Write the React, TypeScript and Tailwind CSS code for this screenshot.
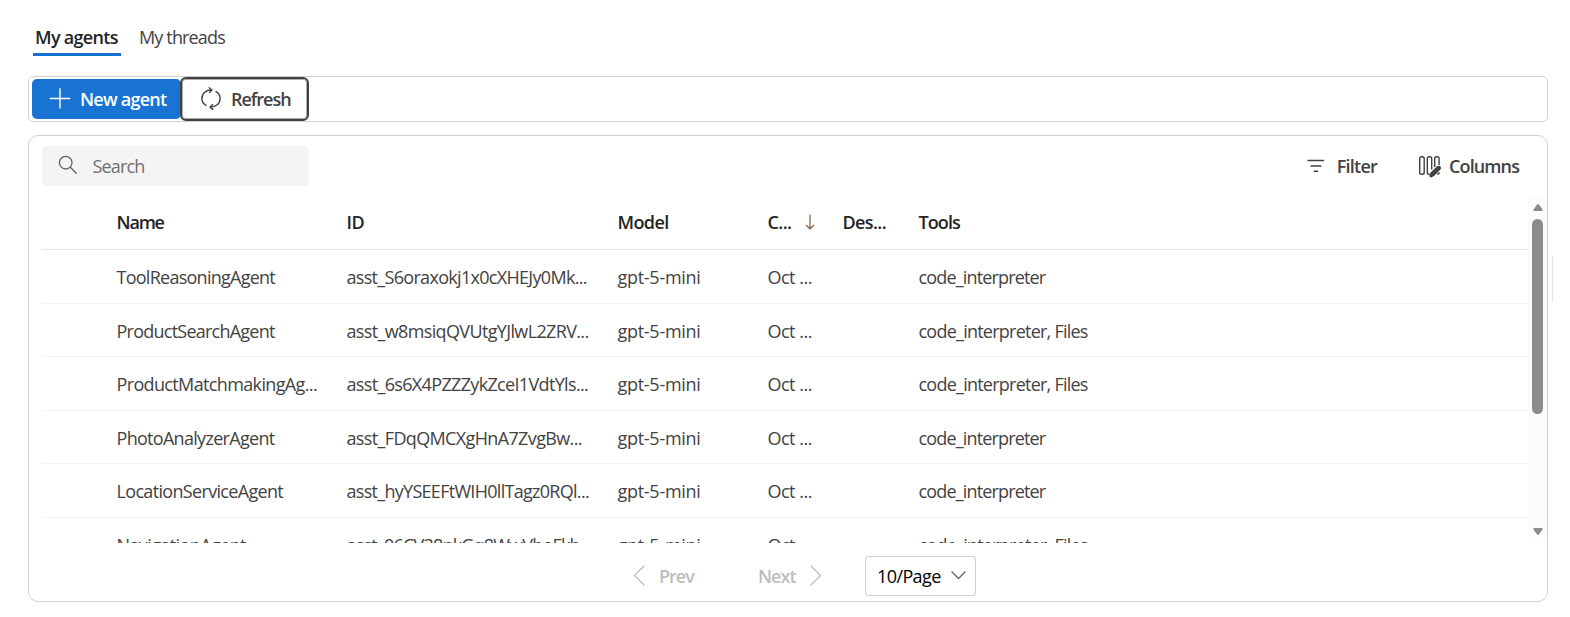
import React from "react";

type Row = { name: string; id: string; idTracking: string; nameTracking: string; tools: string; toolsTracking: string };

const rows: Row[] = [
  { name: "ToolReasoningAgent", nameTracking: "tracking-[-0.74px]", id: "asst_S6oraxokj1x0cXHEJy0Mk...", idTracking: "tracking-[-0.69px]", tools: "code_interpreter", toolsTracking: "tracking-[-0.84px]" },
  { name: "ProductSearchAgent", nameTracking: "tracking-[-0.76px]", id: "asst_w8msiqQVUtgYJlwL2ZRV...", idTracking: "tracking-[-0.64px]", tools: "code_interpreter, Files", toolsTracking: "tracking-[-0.76px]" },
  { name: "ProductMatchmakingAg...", nameTracking: "tracking-[-0.64px]", id: "asst_6s6X4PZZZykZceI1VdtYls...", idTracking: "tracking-[-0.66px]", tools: "code_interpreter, Files", toolsTracking: "tracking-[-0.76px]" },
  { name: "PhotoAnalyzerAgent", nameTracking: "tracking-[-0.7px]", id: "asst_FDqQMCXgHnA7ZvgBw...", idTracking: "tracking-[-0.64px]", tools: "code_interpreter", toolsTracking: "tracking-[-0.84px]" },
  { name: "LocationServiceAgent", nameTracking: "tracking-[-0.67px]", id: "asst_hyYSEEFtWIH0llTagz0RQl...", idTracking: "tracking-[-0.71px]", tools: "code_interpreter", toolsTracking: "tracking-[-0.84px]" },
  { name: "NavigationAgent", nameTracking: "tracking-[-0.6px]", id: "asst_06CV38nkGq8WwVhoFkh...", idTracking: "tracking-[-0.8px]", tools: "code_interpreter, Files", toolsTracking: "tracking-[-0.76px]" },
];

const grid = "grid grid-cols-[230px_271px_150px_75px_76px_1fr] pl-[74.5px] whitespace-nowrap";

function PlusIcon() {
  return (
    <svg width="22" height="22" viewBox="0 0 22 22" fill="none" stroke="currentColor" strokeWidth="1.4" strokeLinecap="round">
      <path d="M11 0.7V19.9M1.2 10.5H20.8" />
    </svg>
  );
}

function RefreshIcon() {
  return (
    <svg width="22" height="24" viewBox="0 0 22 24" fill="none" stroke="currentColor" strokeWidth="1.4" strokeLinecap="round" strokeLinejoin="round">
      <path d="M6 18.4C3.5 17 1.9 14.7 1.9 11.6C1.9 6.4 6 2.9 11.8 3M9.2 0.8L11.9 3L9.5 5.6" />
      <path d="M16 4.7C18.5 6.1 20.1 8.4 20.1 11.5C20.1 16.7 16 20.2 10.2 20.1M12.5 17.5L10.1 20.1L12.8 22.4" />
    </svg>
  );
}

function SearchIcon() {
  return (
    <svg width="20" height="20" viewBox="0 0 20 20" fill="none" stroke="currentColor" strokeWidth="1.3" strokeLinecap="round">
      <circle cx="7.7" cy="7.7" r="6.3" />
      <path d="M12.3 12.3L18.2 18.2" />
    </svg>
  );
}

function FilterIcon() {
  return (
    <svg width="18" height="14" viewBox="0 0 18 14" fill="none" stroke="currentColor" strokeWidth="1.4" strokeLinecap="round">
      <path d="M1 1.5H16.6M4 7H13.9M7.2 12.3H10.6" />
    </svg>
  );
}

function ColumnsIcon() {
  return (
    <svg width="24" height="23" viewBox="0 0 24 23" fill="none" stroke="currentColor" strokeWidth="1.4">
      <rect x="1.7" y="1.7" width="4.5" height="17.6" rx="1.8" />
      <path d="M11.6 19.3H11.2Q9.3 19.3 9.3 17.4V3.5Q9.3 1.7 11.2 1.7H11.8Q13.7 1.7 13.7 3.5V14.6" />
      <path d="M16.7 12V3.5Q16.7 1.7 18.5 1.7H19.2Q21.1 1.7 21.1 3.5V10" />
      <path d="M21.2 17.2Q21.2 19.1 19.2 19.3" />
      <path d="M11.6 22.2L12.6 17.6L19.1 11.3Q20.6 10 22.3 11.3Q23.7 13 22.3 14.6L16 20.9Z" fill="currentColor" stroke="none" />
      <path d="M13.3 20.5L21 12.9" strokeWidth="3.6" strokeLinecap="round" />
    </svg>
  );
}

function Chevron({ d, w, h }: { d: string; w: number; h: number }) {
  return (
    <svg width={w} height={h} viewBox={`0 0 ${w} ${h}`} fill="none" stroke="currentColor" strokeWidth="1.3" strokeLinecap="round" strokeLinejoin="round">
      <path d={d} />
    </svg>
  );
}

export default function App() {
  return (
    <div className="flex h-[617px] w-[1570px] overflow-hidden bg-white font-['Open_Sans','Noto_Sans',sans-serif] text-[18px] leading-[24px] text-[#424242]">
      <div className="ml-[28px] flex w-[1520px] flex-col">
        <nav className="flex h-[56px] gap-[18px] pl-[5px]">
          <button className="flex w-[88px] flex-col items-start border-b-[3px] border-[#1672d0] pl-[2px] pt-[25px] font-semibold tracking-[-0.7px] text-[#242424] whitespace-nowrap">My agents</button>
          <button className="flex flex-col pt-[25px] tracking-[-0.85px]">My threads</button>
        </nav>

        <div className="mt-[20px] flex h-[46px] shrink-0 items-center rounded-[5px] border border-[#d1d1d1] pl-[3px]">
          <button className="flex h-[40px] w-[149px] items-center rounded-[5px] bg-[#1873d3] pl-[17px] font-semibold text-white whitespace-nowrap">
            <PlusIcon />
            <span className="ml-[9px] tracking-[-0.75px]">New agent</span>
          </button>
          <button className="-ml-px flex h-[44px] w-[129px] items-center rounded-[6px] border-2 border-[#424242] bg-white pl-[18px] font-semibold shadow-[inset_0_0_0_1px_#42424270]">
            <RefreshIcon />
            <span className="ml-[9px] tracking-[-1.02px]">Refresh</span>
          </button>
        </div>

        <section className="mt-[13px] flex h-[467px] shrink-0 flex-col rounded-[10px] border border-[#d1d1d1]">
          <div className="flex h-[60px] shrink-0 items-center pl-[13px] pr-[28px]">
            <div className="flex h-[40px] w-[267px] items-center rounded-[5px] bg-[#f4f4f4] pl-[16px] text-[#616161]">
              <span className="mb-[3px]"><SearchIcon /></span>
              <span className="ml-[14.5px] tracking-[-0.85px] text-[#707070]">Search</span>
            </div>
            <div className="ml-auto flex items-center font-semibold">
              <FilterIcon />
              <span className="ml-[12px] tracking-[-0.75px]">Filter</span>
              <span className="ml-[41px] flex"><ColumnsIcon /></span>
              <span className="ml-[7px] tracking-[-0.9px]">Columns</span>
            </div>
          </div>

          <div className="flex h-[347px] shrink-0">
            <div className="ml-[13px] flex w-[1486px] flex-col overflow-hidden">
              <div className={`${grid} h-[54px] shrink-0 items-center border-b border-[#e6e6e6] pb-[2px] font-semibold tracking-[-0.6px] text-[#242424]`}>
                <span className="tracking-[-1.2px]">Name</span>
                <span>ID</span>
                <span>Model</span>
                <span className="flex items-center gap-[14px]">
                  C...
                  <svg width="10" height="16" viewBox="0 0 10 16" fill="none" stroke="#7d5f45" strokeWidth="1.2"><path d="M5 0.5V15M1 11L5 15L9 11" /></svg>
                </span>
                <span>Des...</span>
                <span className="tracking-[-0.9px]">Tools</span>
              </div>
              {rows.map((r) => (
                <div key={r.name} className={`${grid} h-[53.5px] shrink-0 items-center border-b border-[#f2f2f2] pt-[2px] tracking-[-0.5px] last:pt-[3px]`}>
                  <span className={r.nameTracking}>{r.name}</span>
                  <span className={r.idTracking}>{r.id}</span>
                  <span className="tracking-[-0.28px]">gpt-5-mini</span>
                  <span>Oct ...</span>
                  <span />
                  <span className={r.toolsTracking}>{r.tools}</span>
                </div>
              ))}
            </div>
            <div className="flex w-[19px] flex-col items-center bg-[#fcfcfc] pt-[8px] text-[#8b8b8b]">
              <svg width="10" height="7" viewBox="0 0 10 7" fill="currentColor"><path d="M4.1.5Q5-.5 5.9.5L9.5 5.5Q9.8 7 8.6 7H1.4Q.2 7 .5 5.5Z" /></svg>
              <div className="mt-[8px] h-[195px] w-[11px] rounded-full bg-[#8b8b8b]" />
              <svg className="mb-[8px] mt-auto" width="10" height="7" viewBox="0 0 10 7" fill="currentColor"><path d="M4.1 6.5Q5 7.5 5.9 6.5L9.5 1.5Q9.8 0 8.6 0H1.4Q.2 0 .5 1.5Z" /></svg>
            </div>
          </div>

          <div className="flex h-[58px] items-center pl-[604px] pt-[7px] font-semibold text-[#bdbdbd]">
            <span className="pb-px"><Chevron d="M11 1L1.5 10.5L11 20" w={12} h={21} /></span>
            <span className="ml-[14px] w-[35px] tracking-[-1px]">Prev</span>
            <span className="ml-[64px] w-[38px] tracking-[-1px]">Next</span>
            <span className="ml-[14px] pb-px"><Chevron d="M1 1L10.5 10.5L1 20" w={12} h={21} /></span>
            <button className="ml-[43px] flex h-[40px] w-[111px] items-center rounded-[3px] border border-[#d1d1d1] pl-[11px] font-normal text-black">
              <span className="w-[63px] tracking-[-0.6px]">10/Page</span>
              <span className="ml-[11px] text-[#616161]"><Chevron d="M1 1L7.5 7.5L14 1" w={15} h={9} /></span>
            </button>
          </div>
        </section>
      </div>
      <div className="ml-[4px] mt-[256px] h-[46px] w-px bg-[#e6e6e6]" />
    </div>
  );
}
